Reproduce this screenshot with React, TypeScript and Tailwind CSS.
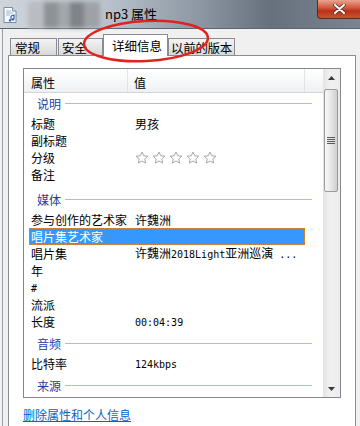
import React from "react";

type Row =
  | { kind: "group"; label: string; h: string }
  | { kind: "item"; name: React.ReactNode; value?: React.ReactNode; selected?: boolean };

const mono = "font-['DejaVu_Sans_Mono',monospace] text-[10px]";

function Stars() {
  return (
    <div className="flex h-[17px] items-center gap-[3px]">
      {[0, 1, 2, 3, 4].map((i) => (
        <svg key={i} width="14" height="14" viewBox="0 0 24 24">
          <path
            d="M12 1.8l3 6.3 6.9.8-5.1 4.8 1.4 6.9L12 17.2l-6.2 3.4 1.4-6.9-5.1-4.8 6.9-.8z"
            fill="#ffffff"
            stroke="#9c9c9c"
            strokeWidth="1.5"
            strokeLinejoin="round"
          />
        </svg>
      ))}
    </div>
  );
}

const rows: Row[] = [
  { kind: "group", label: "说明", h: "h-[22px]" },
  { kind: "item", name: "标题", value: "男孩" },
  { kind: "item", name: "副标题" },
  { kind: "item", name: "分级", value: <Stars /> },
  { kind: "item", name: "备注" },
  { kind: "group", label: "媒体", h: "h-[28px]" },
  { kind: "item", name: "参与创作的艺术家", value: "许魏洲" },
  { kind: "item", name: "唱片集艺术家", selected: true },
  {
    kind: "item",
    name: "唱片集",
    value: (
      <>
        许魏洲<span className={mono}>2018Light</span>亚洲巡演<span className={mono}> ...</span>
      </>
    ),
  },
  { kind: "item", name: "年" },
  { kind: "item", name: <span className={mono}>#</span> },
  { kind: "item", name: "流派" },
  { kind: "item", name: "长度", value: <span className={mono}>00:04:39</span> },
  { kind: "group", label: "音频", h: "h-[25px]" },
  { kind: "item", name: "比特率", value: <span className={mono}>124kbps</span> },
  { kind: "group", label: "来源", h: "h-[25px]" },
];

function TitleBar() {
  return (
    <div className="relative flex h-[29px] shrink-0 items-start border-b border-[#5b6470] bg-[linear-gradient(90deg,#cfd5db_0%,#b9c2cb_30%,#8d98a4_55%,#66717d_75%,#7a8591_100%)]">
      <div className="ml-[3px] mt-[7px]">
        <svg width="14" height="16" viewBox="0 0 14 16">
          <path d="M1 .5h8.5L13 4v11.5H1z" fill="#f8fbff" stroke="#7a8aa0" />
          <path d="M9.5.5V4H13" fill="#dfe7f2" stroke="#7a8aa0" />
          <path d="M3 4h5M3 6h7M3 8h4" stroke="#9fb0c6" />
          <path d="M8 9v4.2M8 9l3-1v4.2" stroke="#2f62b0" strokeWidth="1.2" fill="none" />
          <circle cx="7" cy="13.4" r="1.2" fill="#2f62b0" />
          <circle cx="10" cy="12.4" r="1.2" fill="#2f62b0" />
        </svg>
      </div>
      <div className="ml-[11px] mt-[2px] flex h-[26px] w-[72px] overflow-hidden blur-[2px]">
        <div className="w-[16px] bg-[#b9bcc0]" />
        <div className="w-[14px] bg-[#8e9196]" />
        <div className="w-[12px] bg-[#a3a6aa]" />
        <div className="w-[14px] bg-[#7f8388]" />
        <div className="w-[16px] bg-[#9ea2a7]" />
      </div>
      <div className="ml-[5px] mt-[6px] text-[13px] leading-[16px] text-black">np3 属性</div>
      <div className="ml-auto flex h-[19px] w-[43px] items-center justify-center rounded-bl-[4px] border border-t-0 border-r-0 border-[#5d2a22] bg-[linear-gradient(180deg,#e9a390_0%,#d2543a_45%,#b8311a_60%,#c9542f_100%)]">
        <svg width="13" height="10" viewBox="0 0 13 10">
          <path d="M2 1l9 8M11 1L2 9" stroke="#4a2a22" strokeWidth="3.4" strokeLinecap="round" />
          <path d="M2 1l9 8M11 1L2 9" stroke="#ffffff" strokeWidth="2" strokeLinecap="round" />
        </svg>
      </div>
    </div>
  );
}

function Tabs() {
  const base =
    "flex h-[17px] items-center whitespace-nowrap border border-b-0 border-[#898c95] bg-[linear-gradient(180deg,#f4f4f4_0%,#e6e6e6_50%,#d8d8d8_100%)] text-[12.5px] leading-[15px] text-black";
  return (
    <div className="mt-[6px] flex h-[20px] items-end pl-[2px]">
      <div className={`${base} w-[47px] pl-[4px]`}>常规</div>
      <div className={`${base} ml-[1px] w-[45px] pl-[3px]`}>安全</div>
      <div className="relative z-10 -mb-px flex h-[22px] w-[65px] items-center whitespace-nowrap border border-b-0 border-[#898c95] bg-white pl-[8px] text-[12.5px] leading-[15px] text-black">
        详细信息
      </div>
      <div className={`${base} w-[67px] overflow-hidden pl-[2px] tracking-[-0.3px]`}>以前的版本</div>
    </div>
  );
}

function ScrollBar() {
  return (
    <div className="flex w-[17px] shrink-0 flex-col bg-[linear-gradient(90deg,#e3e3e3_0%,#f0f0f0_40%,#ececec_100%)]">
      <div className="flex h-[18px] items-center justify-center">
        <svg width="7" height="4" viewBox="0 0 7 4">
          <path d="M3.5 0L7 4H0z" fill="#3a3a3a" />
        </svg>
      </div>
      <div className="ml-px mt-[2px] flex h-[103px] w-[14px] items-center justify-center rounded-[2px] border border-[#9a9a9a] bg-[linear-gradient(90deg,#f7f7f7_0%,#e9e9e9_45%,#cfcfcf_100%)]">
        <div className="flex flex-col gap-[1px]">
          <div className="h-px w-[8px] bg-[#5a5a5a]" />
          <div className="h-px w-[8px] bg-[#5a5a5a]" />
          <div className="h-px w-[8px] bg-[#5a5a5a]" />
          <div className="h-px w-[8px] bg-[#5a5a5a]" />
        </div>
      </div>
      <div className="flex-1" />
      <div className="flex h-[17px] items-center justify-center">
        <svg width="7" height="4" viewBox="0 0 7 4">
          <path d="M0 0h7L3.5 4z" fill="#3a3a3a" />
        </svg>
      </div>
    </div>
  );
}

function ListBox() {
  return (
    <div className="ml-[14px] mt-[12px] flex h-[330px] w-[318px] overflow-hidden border border-[#828790] bg-white">
      <div className="flex w-[299px] flex-col overflow-hidden">
        <div className="flex h-[24px] shrink-0 border-b border-[#d5d5d5] bg-[linear-gradient(180deg,#ffffff_0%,#f7f8f9_50%,#eef0f2_100%)] text-[12px] leading-[15px] text-black">
          <div className="flex w-[104px] items-center border-r border-[#e2e3e5] pl-[7px] pt-[4px]">属性</div>
          <div className="flex w-[177px] items-center border-r border-[#e2e3e5] pl-[6px] pt-[4px]">值</div>
          <div className="flex-1" />
        </div>
        {rows.map((r, i) =>
          r.kind === "group" ? (
            <div key={i} className={`flex shrink-0 items-end pb-[4px] pl-[13px] ${r.h}`}>
              <div className="flex w-[275px] items-center gap-[4px]">
                <span className="text-[12px] leading-[15px] text-[#1f3da3]">{r.label}</span>
                <div className="h-px flex-1 bg-[#a9bde3]" />
              </div>
            </div>
          ) : (
            <div
              key={i}
              className={`ml-[5px] flex h-[17px] w-[276px] shrink-0 items-center text-[12px] leading-[17px] ${
                r.selected
                  ? "bg-[#3399ff] text-white outline-1 -outline-offset-1 outline-dotted outline-[#d9893a]"
                  : "text-black"
              }`}
            >
              <div className="w-[100px] whitespace-nowrap pl-[2px]">{r.name}</div>
              <div className="whitespace-nowrap pl-[6px]">{r.value}</div>
            </div>
          )
        )}
      </div>
      <ScrollBar />
    </div>
  );
}

export default function App() {
  return (
    <div className="relative flex h-[426px] w-[360px] flex-col overflow-hidden bg-[#f0f0f0] font-['Noto_Sans_CJK_SC','Noto_Sans',sans-serif]">
      <TitleBar />
      <div className="ml-[2px] flex flex-1 flex-col border-l border-[#9ba1a9] pl-[5px]">
        <Tabs />
        <div className="flex h-[380px] w-[348px] flex-col border border-[#898c95] bg-white">
          <ListBox />
          <div className="ml-[14px] mt-[8px] text-[12px] leading-[17px] text-[#0066cc] underline">
            删除属性和个人信息
          </div>
        </div>
      </div>
      <svg className="pointer-events-none absolute left-0 top-0" width="360" height="426">
        <ellipse cx="146" cy="41" rx="62" ry="20" fill="none" stroke="#e22222" strokeWidth="2.5" transform="rotate(-3 146 41)" />
      </svg>
    </div>
  );
}
